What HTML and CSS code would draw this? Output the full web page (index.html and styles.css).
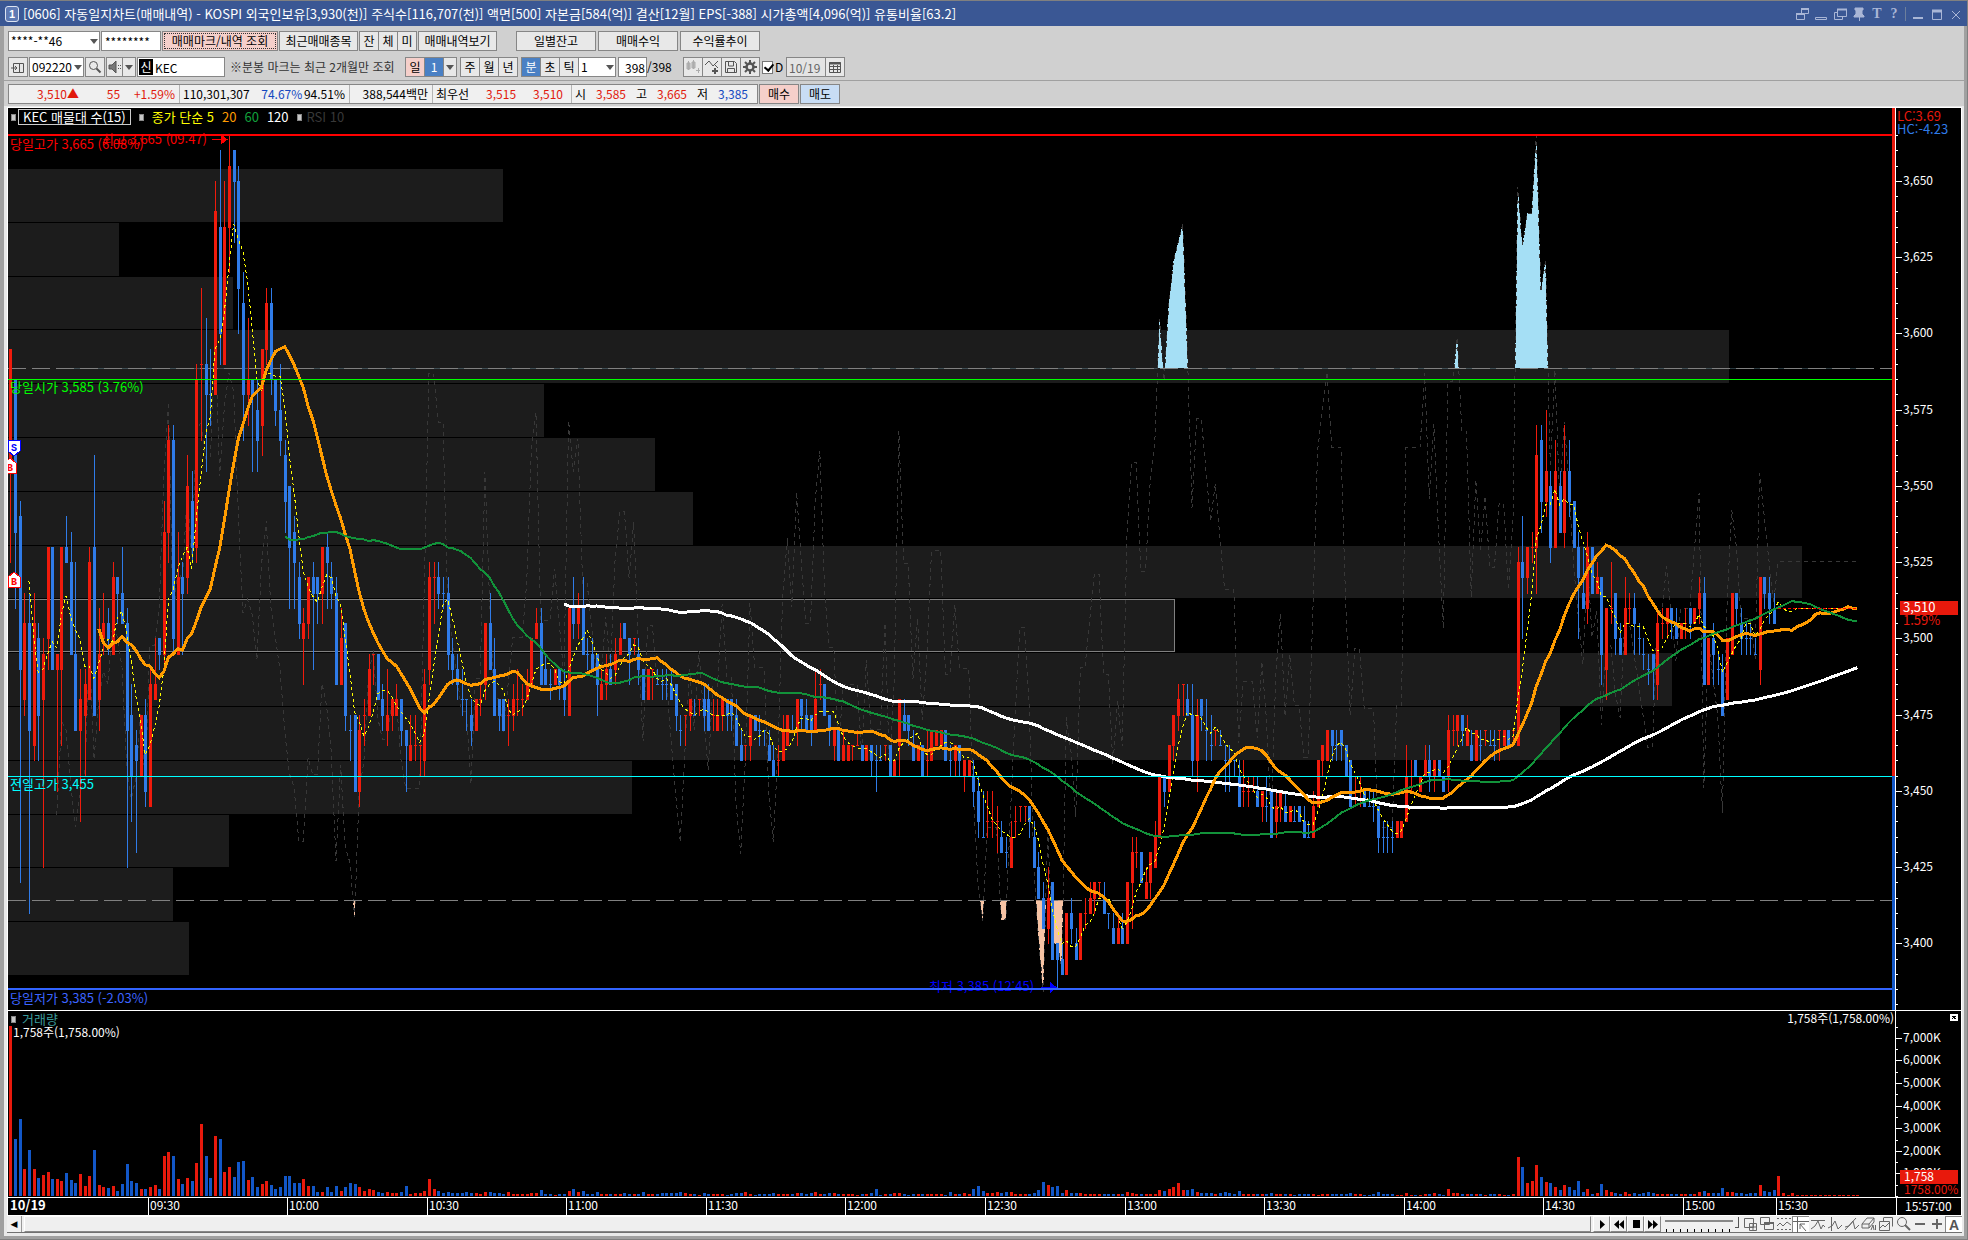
FILE: index.html
```html
<!DOCTYPE html>
<html lang="ko">
<head>
<meta charset="utf-8">
<title>[0606] 자동일지차트(매매내역)</title>
<link rel="stylesheet" href="styles.css">
</head>
<body>
<div class="window">
  <header class="titlebar">
    <span class="badge">1</span>
    <h1 class="title">[0606] 자동일지차트(매매내역) - KOSPI 외국인보유[3,930(천)] 주식수[116,707(천)] 액면[500] 자본금[584(억)] 결산[12월] EPS[-388] 시가총액[4,096(억)] 유통비율[63.2]</h1>
    <div class="winbtns">
      <button aria-label="분리"><svg width="14" height="14"><path d="M1.5 6.5h8v6h-8zM6.500 6V1.500h7v5h-4" /><path d="M1 7h8M6 2h8" stroke-width="2"/></svg></button>
      <button aria-label="접기"><svg width="14" height="14"><path d="M1.500 10.500h11v2h-11z"/></svg></button>
      <button aria-label="복제"><svg width="14" height="14"><path d="M4.500 2.500h9v7h-9zM4 5.500H1.500v7h8V10"/><path d="M4 2.500h10" stroke-width="2"/></svg></button>
      <button aria-label="고정"><svg width="14" height="14"><path class="solid" d="M3 1h8v2h-1v4l2 2v1H2V9l2-2V3H3z"/><path d="M7.500 9v5"/></svg></button>
      <button class="serif" aria-label="글꼴">T</button>
      <button class="serif" aria-label="도움말">?</button>
      <span class="vline"></span>
      <button aria-label="최소화"><svg width="14" height="14"><path d="M2 11h10" stroke-width="2"/></svg></button>
      <button aria-label="최대화"><svg width="14" height="14"><path d="M2.500 3.500h9v9h-9z"/><path d="M2 4h10" stroke-width="3"/></svg></button>
      <button aria-label="닫기"><svg width="14" height="14"><path d="M3 4l8 8M11 4l-8 8"/></svg></button>
    </div>
  </header>

  <main class="content">
    <div class="toolbars">
      <div class="row row-top">
        <span class="select w-92"><select aria-label="계좌"><option>****-**46</option></select></span>
        <input class="w-60" type="text" aria-label="비밀번호" value="********">
        <button class="w-116 pink focus">매매마크/내역 조회</button>
        <button class="w-78">최근매매종목</button>
        <span class="join"><button>잔</button><button>체</button><button>미</button></span>
        <button class="w-78">매매내역보기</button>
        <span class="join wide"><button>일별잔고</button><button>매매수익</button><button>수익률추이</button></span>
      </div>
      <div class="row row-mid">
        <button class="icon" aria-label="창"><svg width="14" height="14"><path d="M2.500 3.500h10v9h-10zM8.500 3v9M0 8h6M4 6l2 2-2 2"/></svg></button>
        <span class="select w-55"><select aria-label="종목코드"><option>092220</option></select></span>
        <button class="icon" aria-label="검색"><svg width="14" height="14"><circle cx="5.500" cy="5.500" r="4"/><path d="M8.500 8.500l4 4" stroke-width="2"/></svg></button>
        <span class="join sound"><button class="icon" aria-label="소리"><svg width="14" height="14"><path class="fill" d="M1 5h3l4-4v12L4 9H1z"/><path d="M10 5.500h1M12 5.500h1M10 8.500h1M12 8.500h1"/></svg></button><button class="drop" aria-label="소리 설정"></button></span>
        <span class="stock"><b>신</b><input type="text" aria-label="종목명" value="KEC"></span>
        <span class="note">※분봉 마크는 최근 2개월만 조회</span>
        <span class="join"><button class="pink">일</button><button class="blue">1</button><button class="drop" aria-label="일 선택"></button></span>
        <span class="join"><button>주</button><button>월</button><button>년</button></span>
        <span class="join"><button class="blue">분</button><button>초</button><button>틱</button><span class="select w-38"><select aria-label="분 단위"><option>1</option></select></span></span>
        <span class="count"><input type="text" aria-label="봉 개수" value="398"><span>/398</span></span>
        <span class="join tools">
          <button class="icon off" aria-label="봉 추가"><svg width="14" height="14"><path class="fill" d="M1 3h3v6H1zM6 2h3v6H6z"/><path d="M2.500 1v9M7.500 0v9M12.500 8v5M10 10.500h4"/></svg></button><button class="icon" aria-label="지표 추가"><svg width="14" height="14"><path d="M0 5l4-4 4 5 5-5M9 4l4 4"/><path d="M10 8v6M7 11h6" stroke-width="2"/></svg></button><button class="icon" aria-label="저장"><svg width="14" height="14"><path d="M1.500 1.500h9l2 2v9h-11zM4.500 2v4h5V2M3.500 12V8.500h7V12"/></svg></button><button class="icon" aria-label="설정"><svg width="14" height="14"><circle cx="7" cy="7" r="3.500" stroke-width="2.500"/><path d="M7 0v3M7 11v3M0 7h3M11 7h3M2 2l2 2M10 10l2 2M12 2l-2 2M4 10l-2 2" stroke-width="2"/></svg></button>
        </span>
        <label class="check"><input type="checkbox" checked>D</label>
        <span class="join date"><input type="text" aria-label="날짜" value="10/19"><button class="icon" aria-label="달력"><svg width="14" height="14"><path d="M1.500 2.500h11v10h-11zM1 6.500h12M1 9.500h12M5.500 5v8M9.500 5v8"/><path d="M1 3.500h12" stroke-width="2"/></svg></button></span>
      </div>
      <div class="row row-quote">
        <div class="quote">
          <div class="cell c1"><span class="up">3,510▲</span><span class="up">55</span><span class="up">+1.59%</span></div>
          <div class="cell c2"><span>110,301,307</span><span class="down">74.67%</span><span>94.51%</span></div>
          <div class="cell c3"><span>388,544백만</span></div>
          <div class="cell c4"><span>최우선</span><span class="up">3,515</span><span class="up">3,510</span></div>
          <div class="cell c5"><span>시</span><span class="up">3,585</span><span>고</span><span class="up">3,665</span><span>저</span><span class="down">3,385</span></div>
        </div>
        <button class="w-40 pink">매수</button>
        <button class="w-40 sky">매도</button>
      </div>
    </div>

    <section class="chart">
      <div class="legend">
        <i></i><span class="boxed">KEC 매물대 수(15)</span>
        <i></i><span class="ma5">종가 단순 5</span><span class="ma20">20</span><span class="ma60">60</span><span class="ma120">120</span>
        <i></i><span class="rsi">RSI 10</span>
      </div>
      <svg id="price"></svg>
      <svg id="price-axis"></svg>
      <svg id="volume"></svg>
      <svg id="volume-axis"></svg>
      <svg id="time"></svg>
      <div class="clock">15:57:00</div>
    </section>

    <footer class="bottombar">
      <div class="scroll"><button aria-label="왼쪽으로">◀</button><div class="track"></div></div>
      <div class="nav">
        <button aria-label="재생"><svg width="12" height="12"><path d="M4 2l5 4.500L4 11z"/></svg></button>
        <button aria-label="뒤로"><svg width="12" height="12"><path d="M6 2v9L1 6.500zM11 2v9L6 6.500z"/></svg></button>
        <button aria-label="정지"><svg width="12" height="12"><path d="M3 2h7v8H3z"/></svg></button>
        <button aria-label="앞으로"><svg width="12" height="12"><path d="M1 2l5 4.500L1 11zM6 2l5 4.500L6 11z"/></svg></button>
      </div>
      <input class="slider" type="range" min="0" max="10" value="10" aria-label="속도">
      <div class="drawtools">
        <button aria-label="추가"><svg width="16" height="16"><path d="M2.500 2.500h9v9h-9zM7.500 7.500h7v7h-7zM11 8v6M8 11h6"/></svg></button>
        <button aria-label="복사"><svg width="16" height="16"><path d="M1.500 1.500h9v7h-9zM5.500 6.500h9v7h-9z"/><path d="M5 7h10" stroke-width="2"/></svg></button>
        <button aria-label="구간"><svg width="16" height="16"><path d="M1 2.500h14M1 13.500h14" stroke-dasharray="2 2"/><path d="M1 10l3-3 3 3 4-4 4 3"/></svg></button>
        <button class="on" aria-label="십자선"><svg width="16" height="16"><path d="M0 4.500h16M4.500 0v16M7 7l6 7M7 7h5M7 7v5"/></svg></button>
        <button aria-label="수평선"><svg width="16" height="16"><path d="M1 4.500h14M1 13l4-3 3-5 3 8 2-4 2 2"/></svg></button>
        <button aria-label="수직선"><svg width="16" height="16"><path d="M4.500 1v14M1 12l4-2 3-5 3 8 4-4"/></svg></button>
        <button aria-label="추세선"><svg width="16" height="16"><path d="M1 14L12 2M1 11l4-1 4-5 2 8 4-4"/></svg></button>
        <button aria-label="모두 지우기"><svg width="16" height="16"><path d="M1 8l5-6h7l-5 6zM1 8v4h7V8M8 12l5-6V2M10 14l2-5 1 5M14.500 9v5"/></svg></button>
        <button aria-label="차트 복사"><svg width="16" height="16"><path d="M5.500 1.500h9v9M5.500 2v3M1.500 5.500h10v9h-10zM2 12l3-3 2 2 4-4"/></svg></button>
        <button aria-label="확대경"><svg width="16" height="16"><circle cx="7" cy="6" r="4.500"/><path d="M10 9l5 5" stroke-width="2"/></svg></button>
        <button aria-label="축소"><svg width="16" height="16"><path d="M3 8h10" stroke-width="2"/></svg></button>
        <button aria-label="확대"><svg width="16" height="16"><path d="M3 8h10M8 3v10" stroke-width="2"/></svg></button>
        <button class="on" aria-label="자동"><b>A</b></button>
      </div>
    </footer>
  </main>
</div>
<script src="chart.js"></script>
</body>
</html>
```
FILE: styles.css
```css
* { box-sizing: border-box; }
html, body { height: 100%; }
body {
  margin: 0;
  background: #808080;
  font: 12px/14px "Noto Sans CJK KR", sans-serif;
  color: #000;
}
button, input, select { font: inherit; color: inherit; margin: 0; border-radius: 0; }
svg { display: block; }

.window { min-height: 100%; height: 100vh; padding: 1px 1px 1px 0; display: flex; flex-direction: column; }

.titlebar { flex: none; height: 25px; display: flex; align-items: center; gap: 4px; padding: 0 4px 0 5px; background: #3a5794; color: #fff; }
.badge { width: 14px; height: 16px; border: 1px solid #dde4f2; border-radius: 3px; background: #5f7ab4; font: bold 11px/14px "Liberation Sans", sans-serif; text-align: center; }
.title { flex: 1; margin: 0; font-size: 13px; line-height: 20px; font-weight: normal; white-space: nowrap; overflow: hidden; }
.winbtns { display: flex; align-items: center; gap: 5px; }
.winbtns button { padding: 0; border: 0; background: none; color: #a9b6d6; }
.winbtns svg { fill: none; stroke: #a9b6d6; }
.winbtns .solid { fill: #a9b6d6; }
.winbtns .serif { width: 12px; font: bold 14px/14px "Liberation Serif", serif; }
.vline { width: 1px; height: 14px; background: #6d7f9c; }

.content { flex: 1; min-height: 0; display: flex; flex-direction: column; border: 3px solid #a0a0a0; border-top: 0; border-left-width: 4px; background: #e9e9e9; }
.toolbars { flex: none; background: #d0d0d0; }
.row { display: flex; align-items: center; gap: 1px; padding: 0 4px; white-space: nowrap; }
.row-top { padding-top: 2px; height: 28px; }
.row-mid { border-bottom: 1px solid #a0a0a0; height: 27px; }
.row-quote { align-items: flex-start; padding-top: 3px; height: 25px; }
.row button, .row input[type=text], .select { height: 20px; border: 1px solid #868686; }
.row button { padding: 0; min-width: 20px; background: #e8e8e8; text-align: center; }
.row input[type=text] { background: #fff; padding: 0 3px; }
.row .pink { background: #f5cfca; }
.row .blue { background: #4a80c4; color: #fff; }
.row .sky { background: #c8ddf5; }
.row .focus { outline: 1px dotted #333; outline-offset: -3px; }
.select { display: flex; background: #fff; position: relative; }
.select select { flex: 1; min-width: 0; padding: 0 0 0 2px; border: 0; background: none; appearance: none; }
.select::after, .drop::after { content: ""; border: 4px solid transparent; border-top: 5px solid #555; border-bottom: 0; }
.select::after { flex: none; align-self: center; margin: 0 1px; }
.row .drop { min-width: 14px; width: 14px; display: flex; align-items: center; justify-content: center; }
.w-38 { width: 38px; }
.w-40 { width: 40px; }
.w-55 { width: 55px; }
.w-60 { width: 60px; }
.w-78 { width: 79px; }
.w-92 { width: 92px; }
.w-116 { width: 116px; }
.join { display: flex; }
.join > * + * { margin-left: -1px; }
.join.wide { margin-left: 18px; gap: 3px; }
.join.wide button { width: 80px; }
.icon { display: inline-flex; align-items: center; justify-content: center; }
.icon svg { fill: none; stroke: #555; }
.icon .fill { fill: #777; }
.off svg { opacity: .4; }
.stock { display: flex; width: 88px; background: #fff; border: 1px solid #868686; }
.stock b { width: 14px; margin: 1px; background: #000; color: #fff; font-weight: normal; line-height: 16px; text-align: center; }
.row .stock input { width: 70px; height: 18px; border: 0; padding: 0 1px; }
.note { width: 172px; margin-left: 4px; color: #333; }
.row-mid .join { margin-left: 2px; }
.row-mid .sound { margin-left: 0; }
.row .sound .icon { width: 17px; min-width: 17px; }
.row-mid .join .select { margin-left: -1px; }
.count { display: flex; align-items: center; width: 62px; margin-left: 1px; }
.row .count input { width: 29px; text-align: right; padding: 0 1px; }
.check { display: flex; align-items: center; gap: 2px; width: 21px; margin-left: 1px; }
.check input { width: 13px; height: 13px; margin: 0; appearance: none; border: 1px solid #777; background: #fff; }
.check input:checked::after { content: ""; display: block; width: 4px; height: 7px; margin: 0 0 0 3px; border: solid #000; border-width: 0 2px 2px 0; transform: rotate(40deg); }
.row .date input { width: 40px; background: #e4e4e4; color: #666; padding: 0 2px; }

.quote { display: flex; height: 20px; width: 750px; border: 1px solid #868686; background: #f0f0f0; line-height: 18px; }
.cell { display: flex; justify-content: space-between; padding: 0 4px 0 3px; border-right: 1px solid #b4b4b4; }
.cell:last-child { border: 0; }
.c1 { width: 171px; padding-left: 28px; }
.c1 span:first-child { margin-right: 14px; }
.c2 { width: 170px; }
.c2 span:first-child { margin-right: 10px; }
.c3 { width: 83px; justify-content: flex-end; }
.c4 { width: 139px; padding-right: 8px; }
.c5 { flex: 1; padding-right: 9px; }
.up { color: #e1190c; }
.down { color: #1448c0; }

.chart {
  position: relative; flex: 1; min-height: 0; margin: 1px 2px 0 3px; border: 1px solid #fff; background: #000;
  display: grid; grid-template-columns: 1fr 65px; grid-template-rows: 903fr 187fr 17px; row-gap: 0;
}
.chart svg { width: 100%; height: 100%; min-height: 0; border-bottom: 1px solid #fff; overflow: hidden; shape-rendering: crispEdges; }
.chart #time { border: 0; }
.chart text { font: 12px "Noto Sans CJK KR", sans-serif; shape-rendering: auto; }
.chart text.label { font-size: 13px; }
.chart text.day { font-weight: bold; }
.clock { color: #fff; line-height: 16px; padding-left: 8px; border-left: 1px solid #fff; }
.legend { position: absolute; left: 3px; top: 1px; display: flex; align-items: center; gap: 8px; height: 16px; color: #fff; font-size: 13px; white-space: nowrap; }
.legend i { width: 5px; height: 7px; background: #c8c8c8; border: 1px solid #888; }
.legend .boxed { border: 1px solid #ccc; padding: 0 4px; margin: 0 0 0 -6px; }
.ma5 { color: #ff0; }
.ma20 { color: #ff9c00; }
.ma60 { color: #12a03c; }
.legend .rsi { color: #383838; margin-left: -3px; }

.bottombar { flex: none; height: 17px; margin: 0 2px 3px 3px; display: flex; gap: 2px; background: #f0f0f0; border-bottom: 1px solid #707070; }
.bottombar button { padding: 0; border: 0; background: #f0f0f0; display: flex; align-items: center; justify-content: center; }
.scroll { flex: 1; display: flex; gap: 2px; }
.scroll button { width: 15px; font: 9px/14px "DejaVu Sans", sans-serif; border-right: 1px solid #999; }
.track { flex: 1; border: 1px solid #fff; border-right: 1px solid #888; border-bottom: 1px solid #888; background: #efefef; }
.nav { display: flex; }
.nav button { width: 17px; border: 1px solid #fff; border-right-color: #888; border-bottom-color: #888; }
.slider { width: 76px; height: 16px; margin: 0; appearance: none; background: linear-gradient(#888, #888) 2px 4px / 68px 2px no-repeat, repeating-linear-gradient(90deg, #000 0 1px, transparent 1px 7px) 3px 13px / 70px 3px no-repeat; }
.slider::-webkit-slider-thumb { appearance: none; width: 4px; height: 11px; margin-top: -3px; background: #f0f0f0; border-right: 1px solid #555; border-bottom: 1px solid #555; }
.drawtools { display: flex; }
.drawtools button { width: 17px; }
.drawtools svg { fill: none; stroke: #666; }
.bottombar .on { background: #fff; border-left: 1px solid #888; border-top: 1px solid #888; }
.drawtools b { font: bold 14px/14px "Liberation Sans", sans-serif; color: #555; }
```
FILE: chart.js
```js
// One-minute candles: colour, then high, body top, body bottom and low,
// counted in 5-won ticks down from the day's high of 3,665.
const CANDLES = `
r14,14,22,28 b16,16,26,31 b24,25,35,49 r30,32,37,38 b30,32,39,51 r30,32,40,41 b32,33,38,41 r33,34,37,48 r27,27,33,35 b27,27,35,35
r34,34,35,43 r27,27,35,40 b25,27,28,28 b26,28,34,34 b28,34,39,39 r35,37,39,45 r35,36,38,42 r27,28,37,37 b21,27,38,38 r31,34,37,39
r30,32,33,34 b31,32,33,34 r28,29,34,34 b29,29,30,32 b27,30,32,32 b31,32,39,48 b36,38,42,45 b39,40,41,47 r38,38,42,42 b37,38,43,44
r35,36,44,44 r33,36,37,37 b33,33,34,35 r24,26,34,35 r19,20,26,28 b19,20,33,34 r26,29,34,34 b28,29,30,34 r21,23,29,30 b22,24,27,28
r15,16,27,28 r10,15,15,20 b12,15,17,22 b14,17,17,19 r3,5,17,17 b1,6,13,15 r3,6,15,15 r0,2,6,9 b1,1,3,7 b2,3,10,13
b9,11,17,20 r12,16,17,19 b16,16,17,22 b16,18,20,22 r14,14,19,21 r10,11,14,15 b10,11,16,17 b16,16,18,19 b15,18,20,21 b20,21,24,26
b23,23,27,31 b25,26,28,31 b28,29,32,33 r31,32,33,36 r29,29,32,33 b28,29,30,35 b29,29,30,32 r27,27,30,32 b26,27,28,31 b28,29,30,31
b29,30,36,36 r31,33,36,36 b32,32,38,39 b38,39,39,41 b38,38,43,43 r38,39,43,44 r37,38,38,40 r34,35,38,38 r34,34,34,36 b34,34,37,37
b36,37,38,39 r35,38,39,40 r37,37,38,39 r36,37,38,38 b37,37,39,40 b39,39,40,43 r38,40,41,41 r38,40,40,41 r40,40,40,42 r35,36,41,42
r28,29,35,36 r28,29,29,32 b28,29,30,31 b29,30,30,31 b29,30,34,35 b33,34,35,36 b34,35,36,37 b35,37,37,38 b37,37,37,39 b37,38,39,40
r37,37,39,39 r36,37,37,38 r32,32,36,37 b30,32,35,35 b33,35,38,38 b37,37,38,39 b37,37,39,39 r37,38,38,40 r36,37,38,39 r35,37,37,38
r36,37,37,38 r35,36,37,37 r33,33,36,36 r31,32,33,33 b31,32,36,36 b34,35,36,36 b35,36,36,37 r35,35,36,36 b35,35,36,37 b35,36,37,38
r31,31,38,38 b29,31,32,33 r30,31,32,33 b29,31,34,34 b33,34,34,35 b33,34,35,35 b34,34,36,38 r35,36,37,37 r34,35,36,37 b34,35,36,36
r33,34,35,36 r32,33,34,34 b32,32,33,33 b33,33,34,36 r33,33,33,34 b33,34,35,36 b35,35,37,37 r35,35,37,37 r35,35,35,37 b35,36,36,36
b35,36,36,37 b35,36,36,37 b35,36,37,37 b36,36,38,39 b38,39,39,40 r38,38,38,40 r37,37,38,39 b37,38,38,38 r37,37,37,38 b36,37,38,39
b36,37,39,39 r37,38,38,39 r37,38,39,39 r37,37,38,39 b37,37,38,39 b37,37,38,39 b37,38,40,40 b39,40,41,41 r40,40,40,41 r38,38,40,41
b38,38,39,39 b38,39,39,40 b39,39,39,40 b39,40,41,41 b40,41,42,42 r40,41,41,42 r38,39,41,41 r38,38,40,40 b38,39,39,39 r37,37,39,40
b37,37,38,39 b37,38,39,39 b38,38,39,40 r35,37,39,39 r35,36,36,37 b36,36,38,38 b38,38,39,40 r39,39,40,41 b39,39,41,41 r39,40,41,41
r40,40,41,41 r40,40,40,41 r39,40,40,40 b40,40,41,41 r40,40,41,41 b40,40,41,42 b40,41,41,43 b40,41,41,41 r40,40,40,41 b40,40,42,42
r41,41,42,42 r37,37,40,42 b37,38,39,39 b38,38,39,40 b39,40,41,41 r40,40,41,41 b40,40,42,42 r39,41,41,42 r39,39,41,41 r39,39,40,40
r39,39,40,40 b39,39,41,41 b40,41,41,42 r40,40,41,42 b40,40,41,42 r41,41,42,43 r41,41,42,42 b41,42,43,44 b42,43,45,46 b43,46,46,46
r43,45,45,46 r43,45,45,46 r44,45,45,47 b45,46,47,47 b46,47,47,48 r45,46,48,48 r44,45,45,46 r44,44,44,45 r44,44,44,45 b44,44,45,46
b45,46,48,48 b47,48,50,50 b49,50,52,52 r48,50,52,53 b49,49,54,54 b53,53,54,56 b53,54,55,55 r51,51,55,55 b50,51,52,53 b52,53,54,54
r51,51,54,54 r50,51,51,52 r49,50,51,51 r49,49,50,51 r49,49,49,50 b49,50,51,51 b51,51,51,52 b51,52,53,53 r51,52,53,53 b51,52,53,53
r49,49,53,53 r46,47,49,52 r46,47,47,48 b47,47,49,49 r48,49,50,50 r47,47,49,50 r45,46,48,48 r42,42,46,46 b42,42,43,44 r40,40,43,43
r38,38,40,41 r36,37,38,39 r36,36,36,38 b36,37,38,38 b36,38,41,42 r37,38,41,43 b37,37,38,39 b37,39,39,41 b38,40,40,41 r39,39,39,40
b39,40,40,40 b40,41,41,43 b40,41,41,43 b41,41,41,42 b41,42,44,44 r41,43,43,44 r42,43,43,44 r42,43,43,43 b42,43,44,44 r43,43,44,45
b42,44,44,45 b43,43,46,46 r43,44,45,46 r43,43,44,45 b43,44,45,45 r44,44,45,45 b44,45,45,45 b44,44,45,45 b44,45,46,46 b45,46,46,46
r43,44,46,46 r41,41,44,44 r40,40,41,42 r39,39,41,41 b39,39,40,41 b39,40,40,41 b39,39,40,41 b40,40,42,42 b41,41,44,44 r42,43,43,44
r42,43,43,44 b43,43,44,44 b43,44,44,44 b43,44,44,45 b44,44,46,47 b45,46,46,47 b45,46,46,47 b45,46,46,47 r45,45,46,46 r45,45,46,46
r40,42,45,45 r41,42,42,43 b41,41,42,42 r42,42,43,43 r40,41,42,42 b40,41,42,43 r41,41,42,43 b41,41,42,42 b42,42,43,43 r38,39,42,43
r38,39,39,40 r38,38,39,40 b38,38,39,40 r38,39,40,40 b39,40,41,41 r39,39,41,41 b39,40,40,41 r39,39,39,40 b39,40,40,40 b39,40,40,41
r39,39,39,41 r39,39,40,40 b39,39,40,40 r39,39,39,40 r27,28,40,40 b25,28,29,33 r27,27,29,30 r26,27,27,28 r19,21,27,30 b19,20,24,26
r18,22,24,25 b22,23,27,28 r20,22,27,27 b22,23,26,26 r19,22,26,27 b20,22,24,25 b24,24,27,27 b26,27,29,33 b27,30,31,31 r26,27,31,32
b27,27,30,30 r28,29,30,30 b29,29,34,36 r31,31,35,37 r28,31,31,32 b30,30,33,34 b32,33,34,34 r29,31,34,34 r30,31,31,32 b30,31,32,34
b32,33,33,34 b33,34,34,35 b34,35,35,36 b34,34,35,37 r31,32,36,37 r31,32,32,33 r31,31,32,33 b31,31,32,33 b31,32,33,33 r32,32,33,33
r31,32,32,33 b31,31,32,33 r31,31,32,32 r29,30,31,32 b29,30,36,36 r33,33,36,36 b32,33,34,36 b34,35,35,36 b34,35,38,38 r33,33,37,37
r30,30,34,34 b30,30,31,32 b31,32,33,34 b32,33,33,34 b32,33,33,34 b33,34,34,34 r29,29,35,36 b29,29,30,31 b29,30,31,32 b30,31,32,32
`.trim().split(/\s+/).map(t => {
  const [high, top, bottom, low] = t.slice(1).split(',').map(Number);
  return { up: t[0] === 'r', high, top, bottom, low };
});

// Bar heights, in units of 1/186 of the volume pane.
const VOLUME = `
170 57 77 27 46 27 18 21 24 17 17 15 23 16 13 22 10 20 46 11 9 8 10 5 12 32 15 13 7 7
9 11 7 40 44 40 17 12 18 15 33 72 40 18 60 57 24 29 19 34 35 16 19 9 12 15 11 7 9 20
20 13 13 17 10 10 4 4 9 4 10 5 9 13 12 9 5 7 6 4 3 4 3 3 4 10 2 3 3 5
17 7 5 3 4 3 3 3 4 3 3 2 4 4 3 3 2 4 2 2 2 2 3 3 6 2 2 1 2 2
5 7 4 5 2 2 4 2 2 2 2 2 3 2 2 2 4 2 2 2 3 3 3 3 4 3 2 2 1 3
2 2 2 2 1 2 3 3 4 2 1 2 2 2 3 2 2 2 2 3 3 2 3 4 2 2 3 3 2 2
2 2 1 2 2 3 7 1 2 2 3 3 2 1 2 2 2 2 2 2 2 1 4 2 2 3 2 7 10 5
3 3 4 3 4 4 2 2 2 2 3 6 14 11 9 10 3 6 3 3 3 2 2 2 2 2 2 2 2 2
4 3 2 2 2 2 2 6 5 7 9 13 6 6 7 4 3 3 3 2 3 4 3 2 5 2 2 2 2 2
2 3 2 2 2 2 1 2 2 2 2 1 2 2 2 2 2 2 3 2 2 1 1 2 4 2 2 2 1 1
3 1 1 1 2 2 3 2 1 7 3 3 2 2 2 2 2 1 2 2 2 1 1 2 39 29 13 15 31 19
14 13 9 6 11 9 6 15 4 7 2 3 12 6 4 3 2 4 2 3 2 3 4 3 2 2 2 2 2 2
2 2 2 4 5 3 3 3 8 4 4 3 3 2 3 3 11 5 4 6 20 3 1 3 1 1 1 1 1 1
1 1 1 1 1 1 1 1`.trim().split(/\s+/).map(Number);

const TOTAL = 398;
const PROFILE = [503, 119, 233, 1728, 544, 655, 693, 1801, 1174, 1671, 1559, 632, 229, 173, 189];
const TIMES = ['09:30', '10:00', '10:30', '11:00', '11:30', '12:00', '12:30', '13:00', '13:30', '14:00', '14:30', '15:00'];
const RED = '#f01b0c', BLUE = '#2f7be8';
const OVERBOUGHT = 68, OVERSOLD = 28;

const closes = CANDLES.map(c => c.up ? c.top : c.bottom);
while (closes.length < TOTAL) closes.push(31);

function average(n) {
  const out = [];
  for (let i = n - 1; i < TOTAL; i++) {
    let sum = 0;
    for (let j = i - n + 1; j <= i; j++) sum += closes[j];
    out.push([i, sum / n]);
  }
  return out;
}

function rsi(n) {
  const out = [];
  let gain = 0, loss = 0;
  for (let i = 1; i < TOTAL; i++) {
    const d = closes[i - 1] - closes[i];
    const g = Math.max(d, 0), l = Math.max(-d, 0);
    if (i <= n) { gain += g / n; loss += l / n; }
    else { gain = (gain * (n - 1) + g) / n; loss = (loss * (n - 1) + l) / n; }
    if (i >= n) out.push([i, 100 * gain / (gain + loss)]);
  }
  return out;
}

const esc = s => String(s).replace(/</g, '&lt;');
const rect = (x, y, w, h, f, extra = '') => `<rect x="${x}" y="${y}" width="${w}" height="${h}" fill="${f}" ${extra}/>`;
const text = (x, y, s, f, extra = '') => `<text x="${x}" y="${y}" fill="${f}" ${extra}>${esc(s)}</text>`;
const line = (pts, stroke, w, extra = '') =>
  `<polyline fill="none" stroke="${stroke}" stroke-width="${w}" points="${pts.map(p => p[0].toFixed(1) + ',' + p[1].toFixed(1)).join(' ')}" ${extra}/>`;

function draw() {
  const price = document.getElementById('price');
  const W = price.clientWidth, H = price.clientHeight;
  const plotW = W - 4;
  const sx = plotW / 1883, sy = H / 902;
  const X = i => (2.3 + i * 4.65) * sx;
  const Y = k => (27.5 + k * 15.25) * sy;
  const level = k => Math.floor(Y(k));
  const R = v => (526.3 - (v - 48) * 13.3) * sy;
  const label = 'class="label"';
  let s = '';

  PROFILE.forEach((end, i) => {
    const y = Math.round((61 + i * 53.8) * sy), next = Math.round((61 + (i + 1) * 53.8) * sy);
    const w = Math.round((end - 8) * sx);
    s += rect(0, y, w, next - y - 1, '#1c1c1c');
    if (i === 8) s += rect(-1, y + .5, w + .5, next - y - 2, 'none', 'stroke="#808080"');
  });

  const r = rsi(10).map(([i, v]) => [X(i), R(v)]);
  const area = v => [[r[0][0], R(v)], ...r, [r[r.length - 1][0], R(v)]].map(p => p.join()).join(' ');
  s += `<clipPath id="over"><rect width="${W}" height="${R(OVERBOUGHT)}"/></clipPath>`;
  s += `<clipPath id="under"><rect y="${R(OVERSOLD)}" width="${W}" height="${H}"/></clipPath>`;
  s += `<polygon points="${area(OVERBOUGHT)}" fill="#a5dff5" clip-path="url(#over)"/>`;
  s += `<polygon points="${area(OVERSOLD)}" fill="#f6c3a4" clip-path="url(#under)"/>`;
  s += line(r, '#383838', 1, 'stroke-dasharray="4 4"');
  for (const v of [OVERBOUGHT, OVERSOLD]) {
    const y = Math.floor(R(v)) + .5;
    s += `<path d="M0 ${y}H${plotW}" stroke="#808080" stroke-dasharray="18 6"/>`;
  }

  s += text(94, 36, '최고 3,665 (09:47)', '#f00', label);
  s += `<path d="M204 31.500h10M213 27v9l6-4.500z" fill="#f00" stroke="#f00"/>`;
  s += text(X(225) - 128, Y(56) + 1, '최저 3,385 (12:45)', '#00f', label);
  s += `<path d="M${X(225) - 16} ${level(56) - 1.5}h9m0-5v10l6-5z" fill="#00f" stroke="#00f"/>`;

  CANDLES.forEach((c, i) => {
    const x = Math.round(X(i)), col = c.up ? RED : BLUE;
    s += rect(x, level(c.high), 1, level(c.low) - level(c.high) + 1, col);
    s += rect(x - 1, level(c.top), 3, level(c.bottom) - level(c.top) + 1, col);
  });
  const plot = pts => pts.map(([i, k]) => [X(i), Y(k)]);
  s += line(plot(average(5)), '#ff0', 1, 'stroke-dasharray="3 3"');
  s += line(plot(average(120)), '#fff', 3);
  s += line(plot(average(20)), '#ff9c00', 3);
  s += line(plot(average(60)), '#12923a', 2);
  s += line([[X(380), level(31) + .5], [X(397), level(31) + .5]], '#f00', 1, 'stroke-dasharray="3 2"');

  s += rect(0, level(16), plotW, 1, '#0f0');
  s += rect(0, level(42), plotW, 1, '#0ff');
  s += rect(0, level(0) - 1, plotW, 2, '#f00');
  s += rect(0, level(56) - 1, plotW, 2, '#3264ff');
  s += text(2, level(0) + 14, '당일고가 3,665 (6.08%)', '#f00', label);
  s += text(2, level(16) + 13, '당일시가 3,585 (3.76%)', '#0f0', label);
  s += text(2, level(42) + 13, '전일고가 3,455', '#0ff', label);
  s += text(2, level(56) + 14, '당일저가 3,385 (-2.03%)', '#3c64ff', label);

  const mark = (x, y, col, ch, down) => {
    const d = down ? `M${x - 6} ${y}h12v11l-6 5-6-5z` : `M${x - 6} ${y + 15}h12v-10l-6-5-6 5z`;
    return `<path d="${d}" fill="#fff" stroke="${col}"/>` +
      text(x, y + (down ? 11 : 13), ch, col, 'text-anchor="middle" style="font:bold 10px Liberation Mono,monospace"');
  };
  s += mark(2, 350 * sy, '#f00', 'B', false);
  s += mark(6, 332 * sy, '#00f', 'S', true);
  s += mark(6, 464 * sy, '#f00', 'B', false);

  s += rect(W - 4, 0, 3, level(42), '#e8190c') + rect(W - 4, level(42), 3, H, '#1257c8') + rect(W - 1, 0, 1, H, '#fff');
  price.innerHTML = s;

  // price scale
  s = '';
  for (let k = 0; k <= 57; k++) {
    const major = k % 5 === 3;
    s += rect(0, level(k), major ? 6 : 2, 1, '#fff');
    if (major) s += text(7, level(k) + 4, (3665 - 5 * k).toLocaleString('en-US'), '#fff');
  }
  s += text(1, 13, 'LC:3.69', '#e8190c', label) + text(1, 26, 'HC:-4.23', BLUE, label);
  s += rect(4, level(31) - 7, 58, 14, '#e8190c') + text(7, level(31) + 4, '3,510', '#fff', label) + text(7, level(31) + 17, '1.59%', '#e8190c', label);
  document.getElementById('price-axis').innerHTML = s;

  // volume pane
  const vol = document.getElementById('volume'), VH = vol.clientHeight, vy = VH / 186;
  s = '';
  for (let i = 0; i < TOTAL; i++) {
    const up = CANDLES[i] ? CANDLES[i].up : true, h = Math.max(1, Math.round(VOLUME[i] * vy));
    s += rect(Math.round(X(i)) - 1, VH - 1 - h, 3, h, up ? '#e8190c' : '#1257c8');
  }
  s += rect(3.5, 5.5, 4, 6, '#c8c8c8', 'stroke="#888"');
  s += text(14, 13, '거래량', '#3a9a9a', label) + text(5, 26, '1,758주(1,758.00%)', '#fff');
  s += text(W - 2, 12, '1,758주(1,758.00%)', '#fff', 'text-anchor="end"') + rect(W - 1, 0, 1, VH, '#fff');
  vol.innerHTML = s;

  s = '';
  for (let n = 0; n <= 15; n++) {
    const y = Math.round((185 - n * 11.3) * vy), major = n % 2 === 0 && n > 0;
    s += rect(0, y, major ? 6 : 2, 1, '#fff');
    if (major) s += text(7, y + 4, n / 2 + ',000K', '#fff');
  }
  s += rect(4, VH - 27, 58, 14, '#e8190c') + text(8, VH - 16, '1,758', '#fff') + text(8, VH - 3, '1758.00%', '#e8190c');
  s += rect(54, 3, 8, 7, '#fff') + '<path d="M56 5l4 3M60 5l-4 3" stroke="#000"/>';
  document.getElementById('volume-axis').innerHTML = s;

  // time scale
  s = text(2, 12, '10/19', '#fff', 'class="label day"');
  const tick = (i, t) => rect(Math.round(X(i)), 0, 1, 17, '#fff') + text(Math.round(X(i)) + 2, 12, t, '#fff');
  TIMES.forEach((t, n) => { s += tick(29.5 + n * 30, t); });
  s += tick(379.5, '15:30');
  document.getElementById('time').innerHTML = s;
}

draw();
addEventListener('resize', draw);
```
